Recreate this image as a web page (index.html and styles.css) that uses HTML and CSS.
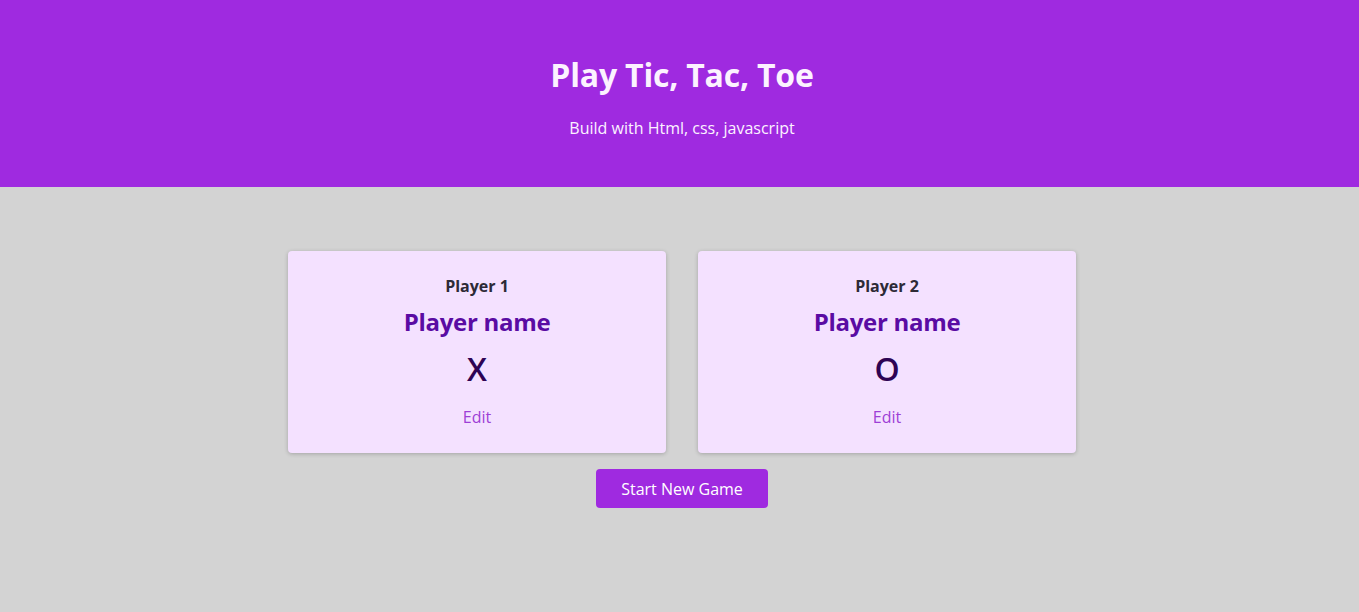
FILE: index.html
```html
<!DOCTYPE html>
<html lang="en">
<head>
<meta charset="utf-8">
<title>Tic Tac Toe</title>
<link rel="stylesheet" href="styles.css">
</head>
<body>
<header class="hero">
  <h1 class="hero-title">Play Tic, Tac, Toe</h1>
  <p class="hero-sub">Build with Html, css, javascript</p>
</header>
<main class="game">
  <ol class="players">
    <li class="player-card">
      <h2 class="player-label">Player 1</h2>
      <h3 class="player-name">Player name</h3>
      <p class="player-symbol">X</p>
      <button class="edit-btn">Edit</button>
    </li>
    <li class="player-card">
      <h2 class="player-label">Player 2</h2>
      <h3 class="player-name">Player name</h3>
      <p class="player-symbol">O</p>
      <button class="edit-btn">Edit</button>
    </li>
  </ol>
  <button class="start-btn">Start New Game</button>
</main>
</body>
</html>
```

FILE: styles.css
```css
* { box-sizing: border-box; }
html, body { margin: 0; padding: 0; }
body {
  font-family: "Open Sans", "Noto Sans", sans-serif;
  background: #d3d3d3;
  color: #2b2b33;
  height: 612px;
}
.hero {
  background: #9f2ae0;
  color: #fcf2ff;
  text-align: center;
  padding: 51px 0 47px 5px;
  height: 187px;
}
.hero-title {
  margin: 0 0 17px;
  font-size: 32px;
  line-height: 48px;
  font-weight: 700;
  letter-spacing: -0.2px;
}
.hero-sub {
  margin: 0;
  font-size: 16px;
  line-height: 24px;
}
.game {
  display: flex;
  flex-direction: column;
  align-items: center;
  padding: 64px 0 0 5px;
}
.players {
  list-style: none;
  margin: 0;
  padding: 0;
  display: flex;
  gap: 32px;
}
.player-card {
  width: 378px;
  height: 202px;
  background: #f4e1ff;
  border-radius: 4px;
  box-shadow: 0 1px 4px rgba(0, 0, 0, 0.22);
  display: flex;
  flex-direction: column;
  align-items: center;
  padding: 23px 0 0;
}
.player-label {
  margin: 0;
  font-size: 16px;
  line-height: 24px;
  font-weight: 700;
  color: #2d2a36;
}
.player-name {
  margin: 6px 0 0;
  font-size: 24px;
  line-height: 36px;
  font-weight: 700;
  letter-spacing: -0.3px;
  color: #5a0ba3;
}
.player-symbol {
  margin: 5px 0 0;
  font-size: 32px;
  line-height: 48px;
  font-weight: 600;
  color: #2e0354;
}
.edit-btn {
  margin: 12px 0 0;
  font: inherit;
  font-size: 16px;
  line-height: 24px;
  color: #9d3fd6;
  background: none;
  border: none;
  padding: 0;
  cursor: pointer;
}
.start-btn {
  margin-top: 16px;
  width: 172px;
  height: 39px;
  font: inherit;
  font-size: 16px;
  line-height: 24px;
  color: #ffffff;
  background: #9f2ae0;
  border: none;
  border-radius: 4px;
  padding: 0;
  cursor: pointer;
}
```
